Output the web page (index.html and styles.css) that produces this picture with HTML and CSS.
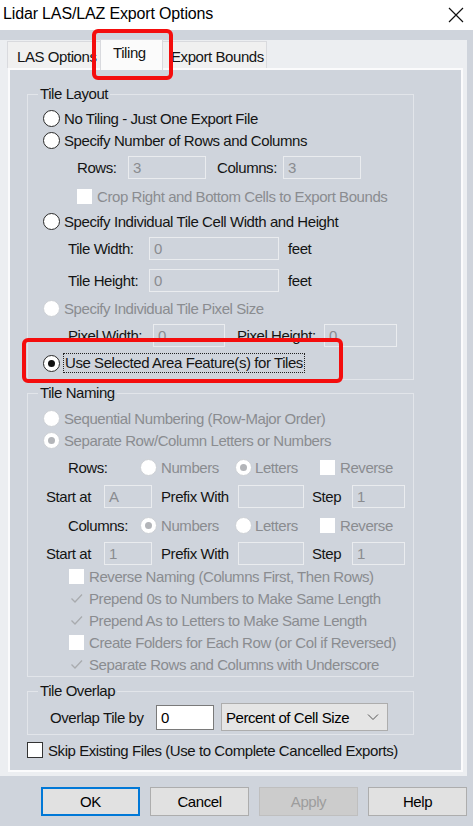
FILE: index.html
```html
<!DOCTYPE html>
<html>
<head>
<meta charset="utf-8">
<link rel="stylesheet" href="styles.css">
</head>
<body>
<div class="dialog">
  <div class="titlebar">
    <span class="title">Lidar LAS/LAZ Export Options</span>
    <svg class="close" width="16" height="16" viewBox="0 0 16 16"><path d="M1 1L15 15M15 1L1 15" stroke="#111" stroke-width="1.2" fill="none"/></svg>
  </div>
  <div class="tabctrl">
    <div class="tabs">
      <div class="tab tab-las">LAS Options</div>
      <div class="tab tab-active">Tiling</div>
      <div class="tab tab-exp">Export Bounds</div>
    </div>
    <div class="panel">
      <fieldset class="group g-layout">
        <legend>Tile Layout</legend>
        <div class="row h22 ind-radio"><span class="radio"></span><span class="lbl">No Tiling - Just One Export File</span></div>
        <div class="row h22 ind-radio"><span class="radio"></span><span class="lbl">Specify Number of Rows and Columns</span></div>
        <div class="row h32 ind-49">
          <span class="cap w51">Rows:</span><span class="field w78">3</span>
          <span class="cap w66 ml11">Columns:</span><span class="field w78">3</span>
        </div>
        <div class="row h26 ind-49"><span class="check"></span><span class="lbl dis">Crop Right and Bottom Cells to Export Bounds</span></div>
        <div class="row h24 ind-radio"><span class="radio"></span><span class="lbl">Specify Individual Tile Cell Width and Height</span></div>
        <div class="row h30 ind-40">
          <span class="cap w81">Tile Width:</span><span class="field w130">0</span><span class="unit">feet</span>
        </div>
        <div class="row h34 ind-40">
          <span class="cap w81">Tile Height:</span><span class="field w130">0</span><span class="unit">feet</span>
        </div>
        <div class="row h22 ind-radio"><span class="radio dis"></span><span class="lbl dis">Specify Individual Tile Pixel Size</span></div>
        <div class="row h32 ind-40">
          <span class="cap w85">Pixel Width:</span><span class="field w72">0</span>
          <span class="cap w87 ml12">Pixel Height:</span><span class="field w73">0</span>
        </div>
        <div class="row h24 ind-radio"><span class="radio on"></span><span class="lbl focus">Use Selected Area Feature(s) for Tiles</span></div>
      </fieldset>

      <fieldset class="group g-naming">
        <legend>Tile Naming</legend>
        <div class="row h22 ind-radio"><span class="radio dis"></span><span class="lbl dis">Sequential Numbering (Row-Major Order)</span></div>
        <div class="row h22 ind-radio"><span class="radio dis on"></span><span class="lbl dis">Separate Row/Column Letters or Numbers</span></div>
        <div class="row h32 ind-40">
          <span class="cap w72">Rows:</span>
          <span class="opt w95"><span class="radio dis"></span><span class="lbl dis">Numbers</span></span>
          <span class="opt w85"><span class="radio dis on"></span><span class="lbl dis g3">Letters</span></span>
          <span class="opt"><span class="check"></span><span class="lbl dis">Reverse</span></span>
        </div>
        <div class="row h26 ind-18">
          <span class="cap w58">Start at</span><span class="field w48">A</span>
          <span class="cap w77 ml9">Prefix With</span><span class="field w66"></span>
          <span class="cap w40 ml8">Step</span><span class="field w53">1</span>
        </div>
        <div class="row h32 ind-40">
          <span class="cap w72">Columns:</span>
          <span class="opt w95"><span class="radio dis on"></span><span class="lbl dis">Numbers</span></span>
          <span class="opt w85"><span class="radio dis"></span><span class="lbl dis g3">Letters</span></span>
          <span class="opt"><span class="check"></span><span class="lbl dis">Reverse</span></span>
        </div>
        <div class="row h24 ind-18">
          <span class="cap w58">Start at</span><span class="field w48">1</span>
          <span class="cap w77 ml9">Prefix With</span><span class="field w66"></span>
          <span class="cap w40 ml8">Step</span><span class="field w53">1</span>
        </div>
        <div class="row h22 ind-41"><span class="check"></span><span class="lbl dis">Reverse Naming (Columns First, Then Rows)</span></div>
        <div class="row h22 ind-41"><span class="check ticked"><svg width="15" height="15" viewBox="0 0 15 15"><path d="M2.5 7.5L6 11L13 3.5" stroke="#a9abae" stroke-width="1.3" fill="none"/></svg></span><span class="lbl dis">Prepend 0s to Numbers to Make Same Length</span></div>
        <div class="row h22 ind-41"><span class="check ticked"><svg width="15" height="15" viewBox="0 0 15 15"><path d="M2.5 7.5L6 11L13 3.5" stroke="#a9abae" stroke-width="1.3" fill="none"/></svg></span><span class="lbl dis">Prepend As to Letters to Make Same Length</span></div>
        <div class="row h22 ind-41"><span class="check"></span><span class="lbl dis">Create Folders for Each Row (or Col if Reversed)</span></div>
        <div class="row h22 ind-41"><span class="check ticked"><svg width="15" height="15" viewBox="0 0 15 15"><path d="M2.5 7.5L6 11L13 3.5" stroke="#a9abae" stroke-width="1.3" fill="none"/></svg></span><span class="lbl dis">Separate Rows and Columns with Underscore</span></div>
      </fieldset>

      <fieldset class="group g-overlap">
        <legend>Tile Overlap</legend>
        <div class="row h32 ind-22">
          <span class="cap w106">Overlap Tile by</span>
          <span class="edit">0</span>
          <span class="select"><span>Percent of Cell Size</span><svg width="12" height="8" viewBox="0 0 12 8"><path d="M1 1.5L6 6.5L11 1.5" stroke="#555" stroke-width="1" fill="none"/></svg></span>
        </div>
      </fieldset>

      <div class="row h22 skip"><span class="box"></span><span class="lbl">Skip Existing Files (Use to Complete Cancelled Exports)</span></div>
    </div>
  </div>
  <div class="buttons">
    <div class="btn btn-ok">OK</div>
    <div class="btn">Cancel</div>
    <div class="btn btn-dis">Apply</div>
    <div class="btn">Help</div>
  </div>
  <div class="hl hl-tab"></div>
  <div class="hl hl-opt"></div>
</div>
</body>
</html>
```

FILE: styles.css
```css
* { box-sizing: border-box; }
html, body { margin: 0; padding: 0; }
body {
  width: 473px;
  height: 826px;
  overflow: hidden;
  background: #cfd4dc;
  font-family: "Liberation Sans", Arial, sans-serif;
  font-size: 15px;
  letter-spacing: -0.43px;
  color: #141414;
}
.dialog { position: relative; width: 473px; height: 826px; }

.titlebar {
  height: 30px;
  background: #ffffff;
  display: flex;
  align-items: center;
  justify-content: space-between;
  padding: 0 9px 0 3px;
}
.title { font-size: 16px; letter-spacing: -0.15px; color: #000; padding-bottom: 2px; }
.close { display: block; }

.tabctrl {
  margin-top: 10px;
  width: 467px;
  height: 736px;
  background: #eceef1;
}
.tabs {
  height: 28px;
  display: flex;
  align-items: flex-end;
  padding-left: 7px;
}
.tab {
  height: 27px;
  display: flex;
  align-items: center;
  background: #f0f0f0;
  border: 1px solid #d9dade;
  border-bottom: none;
  padding-top: 2px;
}
.tab-las { width: 93px; padding-left: 9px; border-right: none; }
.tab-exp { width: 104px; padding-left: 8px; border-left: none; }
.tab-active {
  position: relative;
  z-index: 1;
  width: 63px;
  height: 31px;
  margin-bottom: -2px;
  padding-left: 12px;
  padding-top: 0;
  padding-bottom: 5px;
  background: #fbfbfb;
  border-color: #d9dade;
}

.panel {
  margin-left: 8px;
  width: 455px;
  height: 704px;
  border: 2px solid #fbfbfc;
  background: #cfd4dc;
  padding-top: 17px;
}

.group {
  margin: 0 0 0 17px;
  padding: 0;
  width: 387px;
  min-width: 0;
  border: 1px solid #e2e5ea;
}
.group legend {
  margin-left: 10px;
  padding: 0 2px;
  line-height: 14px;
  color: #141414;
}
.g-layout { padding: 6px 0 4px; }
.g-naming { margin-top: 6px; padding: 7px 0 1px; }
.g-overlap { margin-top: 7px; padding: 3px 0 1px; }

.row { display: flex; align-items: center; white-space: nowrap; }
.h22 { height: 22px; }
.h24 { height: 24px; }
.h26 { height: 26px; }
.h30 { height: 30px; }
.h32 { height: 32px; }
.h34 { height: 34px; }

.ind-radio { padding-left: 15px; }
.ind-49 { padding-left: 49px; }
.ind-40 { padding-left: 40px; }
.ind-41 { padding-left: 41px; }
.ind-18 { padding-left: 18px; }
.ind-22 { padding-left: 22px; }

.lbl { margin-left: 4px; }
.lbl.g3 { margin-left: 3px; }
.check + .lbl { margin-left: 5px; }
.dis { color: #8a8c90; }
.cap { flex: none; }
.unit { margin-left: 9px; }

.w40 { width: 40px; } .w48 { width: 48px; } .w51 { width: 51px; } .w53 { width: 53px; }
.w58 { width: 58px; } .w66 { width: 66px; } .w72 { width: 72px; } .w73 { width: 73px; }
.w77 { width: 77px; } .w78 { width: 78px; } .w81 { width: 81px; } .w85 { width: 85px; }
.w87 { width: 87px; } .w95 { width: 95px; } .w106 { width: 106px; } .w130 { width: 130px; }
.ml8 { margin-left: 8px; } .ml9 { margin-left: 9px; } .ml11 { margin-left: 11px; } .ml12 { margin-left: 12px; }

.field {
  flex: none;
  height: 23px;
  border: 1px solid #eaecef;
  color: #8a8c90;
  padding-left: 4px;
  display: flex;
  align-items: center;
}

.radio {
  flex: none;
  position: relative;
  width: 17px;
  height: 17px;
  border-radius: 50%;
  background: #ffffff;
  border: 1px solid #2a2a2a;
}
.radio.dis { border-color: #cdd0d5; }
.radio.on::after {
  content: "";
  position: absolute;
  left: 4px;
  top: 4px;
  width: 7px;
  height: 7px;
  border-radius: 50%;
  background: #111;
}
.radio.dis.on::after { background: #b3b5b9; }

.opt { display: flex; align-items: center; flex: none; }

.check {
  flex: none;
  width: 15px;
  height: 15px;
  background: #ffffff;
  display: block;
}
.check.ticked { background: transparent; }
.check svg { display: block; }

.focus {
  margin-left: 3px;
  border: 1px dotted #222;
  line-height: 18px;
  padding: 0 1px;
}

.edit {
  flex: none;
  width: 58px;
  height: 25px;
  background: #ffffff;
  border: 1px solid #7a7a7a;
  padding-left: 4px;
  display: flex;
  align-items: center;
  color: #000;
}
.select {
  flex: none;
  margin-left: 7px;
  width: 167px;
  height: 28px;
  background: #e5e5e5;
  border: 1px solid #adadad;
  display: flex;
  align-items: center;
  justify-content: space-between;
  padding: 0 8px 0 4px;
  color: #000;
}
.select svg { display: block; }

.skip { margin-left: 17px; margin-top: 4px; }
.skip .box {
  flex: none;
  width: 16px;
  height: 16px;
  background: #fff;
  border: 1px solid #333;
}
.skip .lbl { margin-left: 5px; }

.buttons {
  margin-top: 11px;
  padding-left: 41px;
  display: flex;
  gap: 10px;
}
.btn {
  width: 99px;
  height: 29px;
  background: #e1e1e1;
  border: 1px solid #adadad;
  display: flex;
  align-items: center;
  justify-content: center;
  color: #000;
}
.btn-ok { border: 2px solid #0078d7; }
.btn-dis { background: #cccccc; border-color: #bfbfbf; color: #9d9d9d; }

.hl {
  position: absolute;
  border: 4px solid #f40d0d;
  border-radius: 6px;
  z-index: 5;
}
.hl-tab { left: 92px; top: 29px; width: 81px; height: 51px; }
.hl-opt { left: 22px; top: 338px; width: 321px; height: 45px; }
```
